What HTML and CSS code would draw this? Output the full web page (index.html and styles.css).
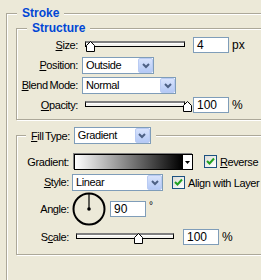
FILE: index.html
```html
<!DOCTYPE html>
<html>
<head>
<meta charset="utf-8">
<title>Stroke</title>
<link rel="stylesheet" href="styles.css">
</head>
<body>
<fieldset class="group outer">
	<legend class="title">Stroke</legend>
	<fieldset class="group struct">
		<legend class="title">Structure</legend>
		<div class="row">
			<label class="lbl"><u>S</u>ize:</label>
			<div class="slider w100">
				<span class="thumb" style="left:0px"><svg width="9" height="11" viewBox="0 0 9 11"><polygon points="0.5,10.5 0.5,4.5 4.5,0.5 8.5,4.5 8.5,10.5" fill="#fff" stroke="#000"/></svg></span>
			</div>
			<div class="num">4</div><span class="unit">px</span>
		</div>
		<div class="row">
			<label class="lbl"><u>P</u>osition:</label>
			<div class="combo w71"><span class="val">Outside</span><span class="drop"><svg width="8" height="6" viewBox="0 0 8 6"><polyline points="1,1 4,4 7,1" fill="none" stroke="#4d6185" stroke-width="2"/></svg></span></div>
		</div>
		<div class="row">
			<label class="lbl"><u>B</u>lend Mode:</label>
			<div class="combo w93"><span class="val">Normal</span><span class="drop"><svg width="8" height="6" viewBox="0 0 8 6"><polyline points="1,1 4,4 7,1" fill="none" stroke="#4d6185" stroke-width="2"/></svg></span></div>
		</div>
		<div class="row">
			<label class="lbl"><u>O</u>pacity:</label>
			<div class="slider w100">
				<span class="thumb" style="left:97px"><svg width="9" height="11" viewBox="0 0 9 11"><polygon points="0.5,10.5 0.5,4.5 4.5,0.5 8.5,4.5 8.5,10.5" fill="#fff" stroke="#000"/></svg></span>
			</div>
			<div class="num">100</div><span class="unit">%</span>
		</div>
	</fieldset>

	<fieldset class="group fill">
		<legend class="fillLegend">
			<label class="fillLbl"><u>F</u>ill Type:</label>
			<div class="combo w77"><span class="val">Gradient</span><span class="drop"><svg width="8" height="6" viewBox="0 0 8 6"><polyline points="1,1 4,4 7,1" fill="none" stroke="#4d6185" stroke-width="2"/></svg></span></div>
		</legend>
		<div class="row">
			<label class="lbl2">Gradient:</label>
			<div class="grad"><span class="gradBar"></span><span class="gradBtn"><svg width="5" height="3" viewBox="0 0 5 3"><polygon points="0,0 5,0 2.5,3" fill="#000"/></svg></span></div>
			<span class="chk rev"><svg width="11" height="11" viewBox="0 0 11 11"><polyline points="2,5 4.5,7.5 9,2.5" fill="none" stroke="#21a121" stroke-width="2"/></svg></span>
			<label class="chkTxt"><u>R</u>everse</label>
		</div>
		<div class="row">
			<label class="lbl2"><u>S</u>tyle:</label>
			<div class="combo w91 style"><span class="val">Linear</span><span class="drop"><svg width="8" height="6" viewBox="0 0 8 6"><polyline points="1,1 4,4 7,1" fill="none" stroke="#4d6185" stroke-width="2"/></svg></span></div>
			<span class="chk align"><svg width="11" height="11" viewBox="0 0 11 11"><polyline points="2,5 4.5,7.5 9,2.5" fill="none" stroke="#21a121" stroke-width="2"/></svg></span>
			<label class="chkTxt">Align with Layer</label>
		</div>
		<div class="row angleRow">
			<label class="lbl2 tall">Angle:</label>
			<svg class="dial" width="34" height="34" viewBox="0 0 34 34">
				<circle cx="17" cy="17" r="15.5" fill="none" stroke="#000" stroke-width="2"/>
				<line x1="17" y1="17" x2="17" y2="2" stroke="#000" stroke-width="1.2"/>
				<circle cx="17" cy="17" r="1.8" fill="#000"/>
			</svg>
			<div class="num angleNum">90</div><span class="deg">°</span>
		</div>
		<div class="row">
			<label class="lbl2">S<u>c</u>ale:</label>
			<div class="slider w98 scale">
				<span class="thumb" style="left:57px"><svg width="9" height="11" viewBox="0 0 9 11"><polygon points="0.5,10.5 0.5,4.5 4.5,0.5 8.5,4.5 8.5,10.5" fill="#fff" stroke="#000"/></svg></span>
			</div>
			<div class="num scaleNum">100</div><span class="unit">%</span>
		</div>
	</fieldset>
</fieldset>
</body>
</html>
```

FILE: styles.css
```css
*{ margin:0; padding:0; box-sizing:border-box;}
html,body{ overflow:hidden;}
body{ background:#ece9d8; font:11px "Liberation Sans", Arial, sans-serif; letter-spacing:-0.4px; word-spacing:-1px; color:#000; padding-left:6px;}
u{ text-decoration:underline;}

.group{ border:1px solid #aca899; box-shadow:inset 1px 1px 0 #fff, 1px 1px 0 #fff; min-width:0;}
.title{ margin-left:10px; padding:0 5px; background:#ece9d8; color:#0046d5; font-weight:bold; font-size:12px; line-height:14px; letter-spacing:0; word-spacing:0;}

.outer{ width:330px; height:320px; margin-top:6px; padding:1px 0 0 9px;}
.outer > .title{ margin-left:1px;}
.struct{ padding:2px 0 6px 0;}
.fill{ margin-top:7px; padding:10px 0 9px 0;}

.row{ display:flex; align-items:flex-start; height:16px; margin-bottom:4px;}
.row:last-child{ margin-bottom:0;}
.angleRow{ height:34px; margin-top:-2px; margin-bottom:3px;}

.lbl{ width:61px; text-align:right; line-height:16px; white-space:nowrap;}
.lbl2{ width:52px; text-align:right; line-height:16px; white-space:nowrap;}
.lbl2.tall{ line-height:34px;}

.slider{ position:relative; height:6px; margin:4px 0 0 7px; border:1px solid #000; border-top:2px solid #808080; background:#f4f3ee; box-shadow:inset 0 1px 0 #fff;}
.w100{ width:100px;}
.w98{ width:98px;}
.thumb{ position:absolute; top:-2px; display:block; width:9px; height:11px;}
.thumb svg{ display:block;}

.num{ width:36px; height:16px; margin-left:8px; padding-left:3px; background:#fff; border:1px solid #7f9db9; font-size:12px; line-height:14px; letter-spacing:0;}
.scaleNum{ margin-left:9px;}
.angleNum{ margin:9px 0 0 4px;}
.unit{ margin-left:3px; line-height:16px; font-size:12px; letter-spacing:0;}
.deg{ margin:8px 0 0 3px; line-height:12px; font-size:10px;}

.combo{ display:flex; align-items:center; height:17px; margin-left:4px; background:#fff; border:1px solid #7f9db9;}
.combo .val{ flex:1; padding-left:3px; line-height:15px; white-space:nowrap; overflow:hidden;}
.drop{ display:flex; align-items:center; justify-content:center; width:15px; height:15px; border:1px solid #b9cbf3; border-radius:2px; background:linear-gradient(#d8e3fc, #b4c9f6);}
.drop svg{ display:block;}
.w71{ width:72px;}
.w93{ width:94px;}
.w77{ width:77px;}
.w91{ width:91px;}
.style{ margin-left:3px;}

.fillLegend{ display:flex; align-items:center; margin-left:9px; padding:0 5px; background:#ece9d8;}
.fillLbl{ line-height:16px; white-space:nowrap;}
.fillLegend .combo{ margin-left:4px;}

.grad{ display:flex; width:119px; height:16px; margin-left:5px; border:1px solid #000; box-shadow:-1px -1px 0 #808080;}
.gradBar{ flex:1; background:linear-gradient(to right, #fff, #000);}
.gradBtn{ display:flex; align-items:center; justify-content:center; width:10px; background:#fff; border-left:1px solid #000;}
.gradBtn svg{ display:block;}

.chk{ display:flex; align-items:center; justify-content:center; width:13px; height:13px; background:linear-gradient(135deg, #dcdcd7, #fff); border:1px solid #1c5180;}
.chk svg{ display:block;}
.rev{ margin:1px 0 0 11px;}
.align{ margin:2px 0 0 9px;}
.chkTxt{ margin-left:3px; line-height:16px; white-space:nowrap; word-spacing:0;}
.align + .chkTxt{ margin-top:1px;}

.dial{ display:block; margin-left:3px;}
.scale{ margin-left:7px;}
```
